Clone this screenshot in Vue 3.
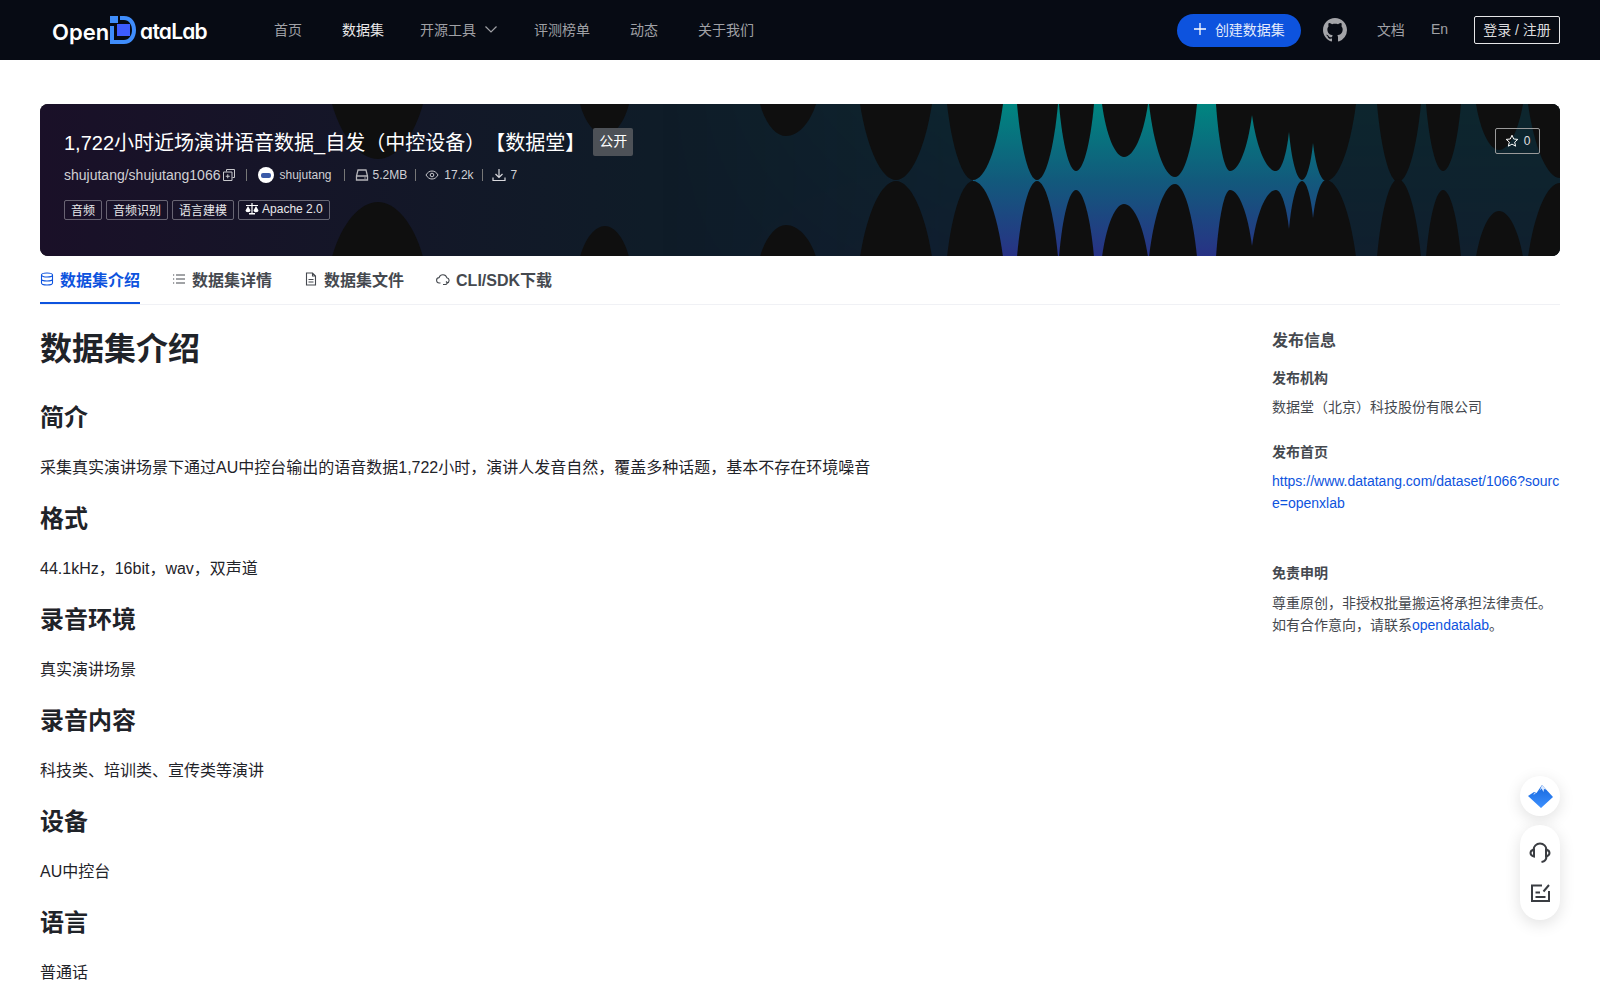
<template>
  <div class="page">
    <header class="nav">
      <a class="logo">
        <span>Open</span>
        <svg class="logo-d" width="28" height="30" viewBox="0 0 28 30">
          <path d="M1 1h8v7H1z" fill="#3f8dfb" />
          <path d="M11 1h4c7.500 0 12 6 12 14s-4.500 14-12 14H1V11h4v14h10c5 0 8-4.500 8-10S20 5 15 5h-4z" fill="#3f8dfb" />
          <path d="M8 9h13v12H8z" fill="#3d5cff" />
        </svg>
        <span class="rest">ataLab</span>
      </a>
      <nav class="menu">
        <a>首页</a>
        <a class="active">数据集</a>
        <a class="drop">开源工具
          <svg width="14" height="14" viewBox="0 0 14 14" fill="none" stroke="currentColor" stroke-width="1.200"><path d="M1.500 4.500 7 10l5.500-5.500" /></svg>
        </a>
        <a>评测榜单</a>
        <a>动态</a>
        <a>关于我们</a>
      </nav>
      <div class="nav-right">
        <button class="create">
          <svg width="14" height="14" viewBox="0 0 14 14" stroke="#fff" stroke-width="1.300"><path d="M7 1v12M1 7h12" /></svg>
          创建数据集
        </button>
        <svg class="github" width="24" height="24" viewBox="0 0 16 16" fill="#a3a4a8">
          <path d="M8 0C3.580 0 0 3.580 0 8c0 3.540 2.290 6.530 5.470 7.590.4.070.55-.17.55-.38 0-.19-.01-.82-.01-1.490-2.010.37-2.530-.49-2.690-.94-.09-.23-.48-.94-.82-1.130-.28-.15-.68-.52-.01-.53.630-.01 1.080.58 1.230.82.720 1.210 1.870.87 2.330.66.070-.52.280-.87.510-1.070-1.780-.2-3.640-.89-3.640-3.950 0-.87.310-1.590.820-2.150-.08-.2-.36-1.020.08-2.120 0 0 .67-.21 2.200.820.640-.18 1.320-.27 2-.27s1.360.09 2 .27c1.530-1.040 2.200-.82 2.200-.82.440 1.100.16 1.920.08 2.120.510.560.820 1.270.820 2.150 0 3.070-1.870 3.750-3.650 3.950.290.250.540.730.540 1.480 0 1.070-.01 1.930-.01 2.200 0 .210.150.460.550.380A8.010 8.010 0 0 0 16 8c0-4.420-3.580-8-8-8z" />
        </svg>
        <a class="doc">文档</a>
        <a class="lang">En</a>
        <button class="login">登录 / 注册</button>
      </div>
    </header>

    <main class="main">
      <section class="banner">
        <svg class="wave" width="1520" height="152" viewBox="0 0 1520 152" preserveAspectRatio="none">
          <defs>
            <linearGradient id="baseBg" x1="0" x2="1" y1="0" y2="0">
              <stop offset="0" stop-color="#1a1028" />
              <stop offset="0.4" stop-color="#0f1c28" />
              <stop offset="1" stop-color="#0f1f28" />
            </linearGradient>
            <linearGradient id="bright" x1="0" x2="0" y1="0" y2="1">
              <stop offset="0" stop-color="#008580" />
              <stop offset="0.5" stop-color="#125a7c" />
              <stop offset="1" stop-color="#283285" />
            </linearGradient>
            <linearGradient id="fade" x1="0" x2="1" y1="0" y2="0">
              <stop offset="0.4" stop-color="#fff" stop-opacity="0" />
              <stop offset="0.6" stop-color="#fff" stop-opacity="1" />
            </linearGradient>
            <mask id="fadeMask"><rect width="1520" height="152" fill="url(#fade)" /></mask>
          </defs>
          <rect width="1520" height="152" fill="url(#baseBg)" />
          <rect width="1520" height="152" fill="url(#bright)" opacity="0.08" mask="url(#fadeMask)" />
          <rect x="933" width="353" height="152" fill="url(#bright)" />
          <g fill="#0f0f0f">
            <path v-for="(d, i) in lobes" :key="i" :d="d" />
          </g>
          <g fill="#0f0f0f" transform="matrix(1 0 0 -1 0 153)">
            <path v-for="(d, i) in lobes" :key="i" :d="d" />
          </g>
        </svg>

        <div class="title-row">
          <h1>1,722小时近场演讲语音数据_自发（中控设备）【数据堂】</h1>
          <span class="public">公开</span>
        </div>
        <div class="meta">
          <span class="repo">shujutang/shujutang1066</span>
          <svg class="copy" width="12" height="12" viewBox="0 0 12 12" fill="none" stroke="#c8c8cc"><path d="M3.500 2.500v-2h8v8h-2M.5 3h8.500v8.500H.5zM4.750 5.250v4M2.750 7.250h4" /></svg>
          <i class="sep first"></i>
          <span class="avatar"><b></b></span>
          <span>shujutang</span>
          <i class="sep after-name"></i>
          <svg class="drive" width="14" height="14" viewBox="0 0 14 14" fill="none" stroke="#b4b4b8" stroke-width="1.300"><path d="M3 2h8l1.500 6v4h-11V8zM1.500 8h11M9.500 10h1" /></svg>
          <span>5.2MB</span>
          <i class="sep"></i>
          <svg width="14" height="14" viewBox="0 0 14 14" fill="none" stroke="#c8c8cc"><path d="M1 7c1.500-2.600 3.500-4 6-4s4.500 1.400 6 4c-1.500 2.600-3.500 4-6 4S2.500 9.600 1 7z" /><circle cx="7" cy="7" r="1.800" /></svg>
          <span>17.2k</span>
          <i class="sep"></i>
          <svg width="14" height="14" viewBox="0 0 14 14" fill="none" stroke="#d8d8dc" stroke-width="1.200"><path d="M7 1v8M3.500 6 7 9.500 10.500 6M1 9.500v3h12v-3" /></svg>
          <span>7</span>
        </div>
        <div class="tags">
          <span class="tag">音频</span>
          <span class="tag">音频识别</span>
          <span class="tag">语言建模</span>
          <span class="tag license">
            <svg width="14" height="12" viewBox="0 0 14 12" fill="#fff"><path d="M6.400 0h1.200v10h2.400v1.500H4V10h2.400zM1 2h12v1H1zM3 3 .5 7.500a2.500 1.800 0 0 0 5 0zM11 3 8.500 7.500a2.500 1.800 0 0 0 5 0z" /></svg>
            Apache 2.0
          </span>
        </div>
        <button class="star">
          <svg width="14" height="14" viewBox="0 0 14 14" fill="none" stroke="#fff"><path d="M7 1.200 8.700 5l4.100.4-3.100 2.700.9 4.100L7 10.100l-3.600 2.100.9-4.100-3.100-2.700L5.300 5z" /></svg>
          0
        </button>
      </section>

      <div class="tabs">
        <a class="tab on">
          <svg width="14" height="14" viewBox="0 0 14 14" fill="none" stroke="currentColor" stroke-width="1.100"><ellipse cx="7" cy="3" rx="5.500" ry="2" /><path d="M1.500 3v8c0 1.100 2.500 2 5.500 2s5.500-.9 5.500-2V3M1.500 7c0 1.100 2.500 2 5.500 2s5.500-.9 5.500-2" /></svg>
          数据集介绍
        </a>
        <a class="tab">
          <svg width="14" height="14" viewBox="0 0 14 14" fill="none" stroke="currentColor" stroke-width="1.100"><path d="M4 3h9M4 7h9M4 11h9M1 3h1.200M1 7h1.200M1 11h1.200" /></svg>
          数据集详情
        </a>
        <a class="tab">
          <svg width="14" height="14" viewBox="0 0 14 14" fill="none" stroke="currentColor" stroke-width="1.100"><path d="M2.500 1h6l3 3v9h-9zM8.500 1v3h3M4.500 7.500h5M4.500 10h5" /></svg>
          数据集文件
        </a>
        <a class="tab">
          <svg width="14" height="14" viewBox="0 0 14 14" fill="none" stroke="currentColor" stroke-width="1.100"><path d="M4.500 11H3.500a2.700 2.700 0 0 1-.4-5.400 4 4 0 0 1 7.700.1 2.700 2.700 0 0 1 .2 5.300M7 12.500h3l1.500-1.500M10 9.500l1.500 1.500" /></svg>
          CLI/SDK下载
        </a>
      </div>

      <div class="body">
        <article class="intro">
          <h1>数据集介绍</h1>
          <template v-for="s in sections" :key="s.title">
            <h2>{{ s.title }}</h2>
            <p>{{ s.text }}</p>
          </template>
        </article>
        <aside class="side">
          <h3>发布信息</h3>
          <h4>发布机构</h4>
          <p>数据堂（北京）科技股份有限公司</p>
          <h4>发布首页</h4>
          <p class="link">https://www.datatang.com/dataset/1066?source=openxlab</p>
          <h4 class="notice">免责申明</h4>
          <p>尊重原创，非授权批量搬运将承担法律责任。<br />如有合作意向，请联系<a>opendatalab</a>。</p>
        </aside>
      </div>
    </main>

    <div class="float-top">
      <svg width="25" height="23" viewBox="0 0 25 23">
        <defs>
          <linearGradient id="mount" x1="0" x2="0" y1="0" y2="1">
            <stop offset="0" stop-color="#1567dc" />
            <stop offset="1" stop-color="#3d90ff" />
          </linearGradient>
        </defs>
        <path d="M14 0 25 12 13 23 0 11 6 7 8.500 8z" fill="url(#mount)" />
        <path d="M14 0 18 4.500 16 4 15.500 7 13.500 3.500 11.500 6z" fill="#dbe9ff" />
        <path d="M5 9.500 7 7.800 7.500 9z" fill="#dbe9ff" />
      </svg>
    </div>
    <div class="float-pill">
      <svg width="22" height="22" viewBox="0 0 22 22" fill="none" stroke="#3a3d42" stroke-width="2">
        <path d="M4.500 9V8a6.500 6.500 0 0 1 13 0v1M17.500 14c0 3-2 5.500-5 6" />
        <path d="M5 7.500C2.800 8 1.500 9.200 1.500 11S2.800 14 5 14.500zM17 7.500c2.200.5 3.500 1.700 3.500 3.500s-1.300 3-3.500 3.500z" />
      </svg>
      <svg width="19" height="18" viewBox="0 0 19 18" fill="none" stroke="#3a3d42" stroke-width="2">
        <path d="M11 1.500H1v15.500h17V7M4.500 8.500H9M4.500 13h10M12.500 7.500 18 1" />
      </svg>
    </div>
  </div>
</template>

<script setup>
const sections = [
  { title: '简介', text: '采集真实演讲场景下通过AU中控台输出的语音数据1,722小时，演讲人发音自然，覆盖多种话题，基本不存在环境噪音' },
  { title: '格式', text: '44.1kHz，16bit，wav，双声道' },
  { title: '录音环境', text: '真实演讲场景' },
  { title: '录音内容', text: '科技类、培训类、宣传类等演讲' },
  { title: '设备', text: 'AU中控台' },
  { title: '语言', text: '普通话' },
]

// x0, x1 = lobe edges, c/h = tip, y0/y1 = height where each edge starts
const lobeData = [
  [292, 383, 338, 55],
  [540, 589, 565, 31],
  [720, 776, 746, 32],
  [820, 892, 856, 76],
  [907, 963, 933, 76],
  [977, 1018, 997, 76],
  [1019, 1054, 1036, 67],
  [1062, 1108, 1084, 53],
  [1109, 1157, 1135, 73],
  [1176, 1212, 1190, 67, 0, 11],
  [1212, 1249, 1236, 67, 11, 28],
  [1249, 1273, 1262, 76, 28, 39],
  [1273, 1316, 1286, 77, 39, 0],
  [1337, 1381, 1358, 78],
  [1386, 1421, 1403, 67],
  [1436, 1483, 1459, 46],
  [1488, 1552, 1520, 74],
]

const lobes = lobeData.map(([x0, x1, c, h, y0 = 0, y1 = 0]) => {
  const l = c - x0
  const r = x1 - c
  return `M${x0} 0L${x0} ${y0}C${x0 + l * 0.2} ${y0 + (h - y0) * 0.6} ${c - l * 0.4} ${h} ${c} ${h}` +
    `C${c + r * 0.4} ${h} ${x1 - r * 0.2} ${y1 + (h - y1) * 0.6} ${x1} ${y1}L${x1} 0Z`
})
</script>

<style>
html, body {
  margin: 0;
  height: 1000px;
  overflow: hidden;
  background: #fff;
}
</style>

<style scoped>
.page {
  font-family: "Liberation Sans", "Noto Sans CJK SC", sans-serif;
  color: #1f2329;
  height: 1000px;
  overflow: hidden;
  position: relative;
  text-spacing-trim: space-all;
}

.nav {
  height: 60px;
  background: #070b14;
  display: flex;
  align-items: center;
  padding: 0 40px 0 52px;
}
.logo {
  display: flex;
  align-items: center;
  width: 156px;
  font-family: Inter, sans-serif;
  font-size: 22px;
  font-weight: 600;
  color: #fff;
  font-feature-settings: "cv11" 1;
}
.logo span {
  padding-top: 3px;
}
.logo .rest {
  font-size: 21px;
  letter-spacing: -0.8px;
}
.logo-d {
  margin: 0 3px 0 0;
  flex: none;
}
.menu {
  display: flex;
  align-items: center;
  gap: 40px;
  margin-left: 66px;
  padding-bottom: 2px;
  font-size: 14px;
  color: #a0a1a6;
}
.menu .active {
  color: #e9e9ea;
}
.drop {
  display: flex;
  align-items: center;
  gap: 8px;
  margin: 0 -4px 0 -4px;
}
.nav-right {
  margin-left: auto;
  display: flex;
  align-items: center;
  font-size: 14px;
  color: #a0a1a6;
}
.create {
  width: 124px;
  height: 33px;
  border: none;
  border-radius: 17px;
  background: #0d53de;
  color: #e4ebfb;
  font: inherit;
  display: flex;
  align-items: center;
  justify-content: center;
  gap: 8px;
  padding: 0 0 2px;
}
.github {
  margin-left: 22px;
}
.doc {
  margin-left: 30px;
  padding-bottom: 2px;
}
.lang {
  margin-left: 26px;
  padding-bottom: 2px;
}
.login {
  margin-left: 26px;
  width: 86px;
  height: 28px;
  box-sizing: border-box;
  background: transparent;
  border: 1px solid #e6e6e8;
  border-radius: 2px;
  color: #dcdcde;
  font: inherit;
  padding: 0 0 2px;
}

.main {
  padding: 44px 40px 0;
}

.banner {
  position: relative;
  height: 152px;
  box-sizing: border-box;
  border-radius: 8px;
  overflow: hidden;
  padding: 24px 24px 0;
  color: #fff;
  background: #0f0f0f;
}
.wave {
  position: absolute;
  left: 0;
  top: 0;
}
.title-row,
.meta,
.tags {
  position: relative;
}
.title-row {
  display: flex;
  align-items: center;
  gap: 8px;
  height: 28px;
}
.title-row h1 {
  margin: 0;
  padding-bottom: 2px;
  font-size: 20px;
  font-weight: 400;
}
.public {
  width: 40px;
  height: 28px;
  line-height: 27px;
  text-align: center;
  background: #4d5157;
  border-radius: 2px;
  font-size: 14px;
}
.meta {
  display: flex;
  align-items: center;
  height: 20px;
  margin-top: 9px;
  font-size: 12px;
  color: #d0d0d4;
  gap: 5px;
}
.repo {
  font-size: 14px;
}
.copy {
  margin-left: -2px;
}
.sep {
  width: 1px;
  height: 12px;
  background: #777;
  margin: 0 4px 0 3px;
}
.sep.first {
  margin: 0 6px 0 6px;
}
.sep.after-name {
  margin: 0 5px 0 7px;
}
.drive {
  margin-right: -1px;
}
.avatar {
  width: 16px;
  height: 16px;
  border-radius: 50%;
  background: #fff;
  display: flex;
  align-items: center;
  justify-content: center;
}
.avatar b {
  width: 10px;
  height: 5px;
  border-radius: 2px;
  background: #3a5aa8;
}
.tags {
  display: flex;
  gap: 4px;
  margin-top: 15px;
}
.tag {
  display: flex;
  align-items: center;
  gap: 3px;
  height: 20px;
  box-sizing: border-box;
  padding: 0 6px 2px;
  border: 1px solid rgba(255, 255, 255, 0.35);
  border-radius: 2px;
  font-size: 12px;
  color: #e8e8ea;
}
.star {
  position: absolute;
  right: 20px;
  top: 24px;
  width: 45px;
  height: 26px;
  padding: 0;
  background: transparent;
  border: 1px solid #9a9a9a;
  border-radius: 2px;
  color: #e0e0e0;
  font-size: 12px;
  font-family: inherit;
  display: flex;
  align-items: center;
  justify-content: center;
  gap: 5px;
}

.tabs {
  display: flex;
  gap: 32px;
  height: 48px;
  border-bottom: 1px solid #f0f1f5;
}
.tab {
  display: flex;
  align-items: center;
  gap: 6px;
  height: 48px;
  box-sizing: border-box;
  padding-bottom: 3px;
  font-size: 16px;
  font-weight: 700;
  color: #45494f;
}
.tab.on {
  color: #0d53de;
  border-bottom: 2px solid #0d53de;
  padding-bottom: 1px;
}

.body {
  display: flex;
  justify-content: space-between;
}
.intro {
  flex: 1;
}
.intro h1 {
  margin: 20px 0 27px;
  font-size: 32px;
  line-height: 48px;
  font-weight: 700;
}
.intro h2 {
  margin: 0 0 20px;
  font-size: 24px;
  line-height: 36px;
  font-weight: 700;
}
.intro p {
  margin: 0 0 21px;
  font-size: 16px;
  line-height: 24px;
}

.side {
  width: 288px;
  padding-top: 24px;
  font-size: 14px;
  line-height: 22px;
  color: #45494f;
}
.side h3 {
  margin: 0 0 14px;
  font-size: 16px;
  line-height: 24px;
  font-weight: 700;
}
.side h4 {
  margin: 0 0 7px;
  font-size: 14px;
  line-height: 22px;
  font-weight: 700;
}
.side p {
  margin: 0 0 23px;
}
.side .notice {
  margin: 48px 0 8px;
}
.side .link {
  color: #0d53de;
  word-break: break-all;
}
.side a {
  color: #0d53de;
}

.float-top,
.float-pill {
  position: absolute;
  right: 40px;
  width: 40px;
  background: #fff;
  box-shadow: 0 4px 16px rgba(0, 0, 0, 0.12);
  display: flex;
  flex-direction: column;
  align-items: center;
  justify-content: center;
}
.float-top {
  top: 776px;
  height: 40px;
  border-radius: 50%;
}
.float-pill {
  top: 825px;
  height: 95px;
  border-radius: 20px;
  gap: 20px;
  padding-bottom: 2px;
  box-sizing: border-box;
}
</style>
